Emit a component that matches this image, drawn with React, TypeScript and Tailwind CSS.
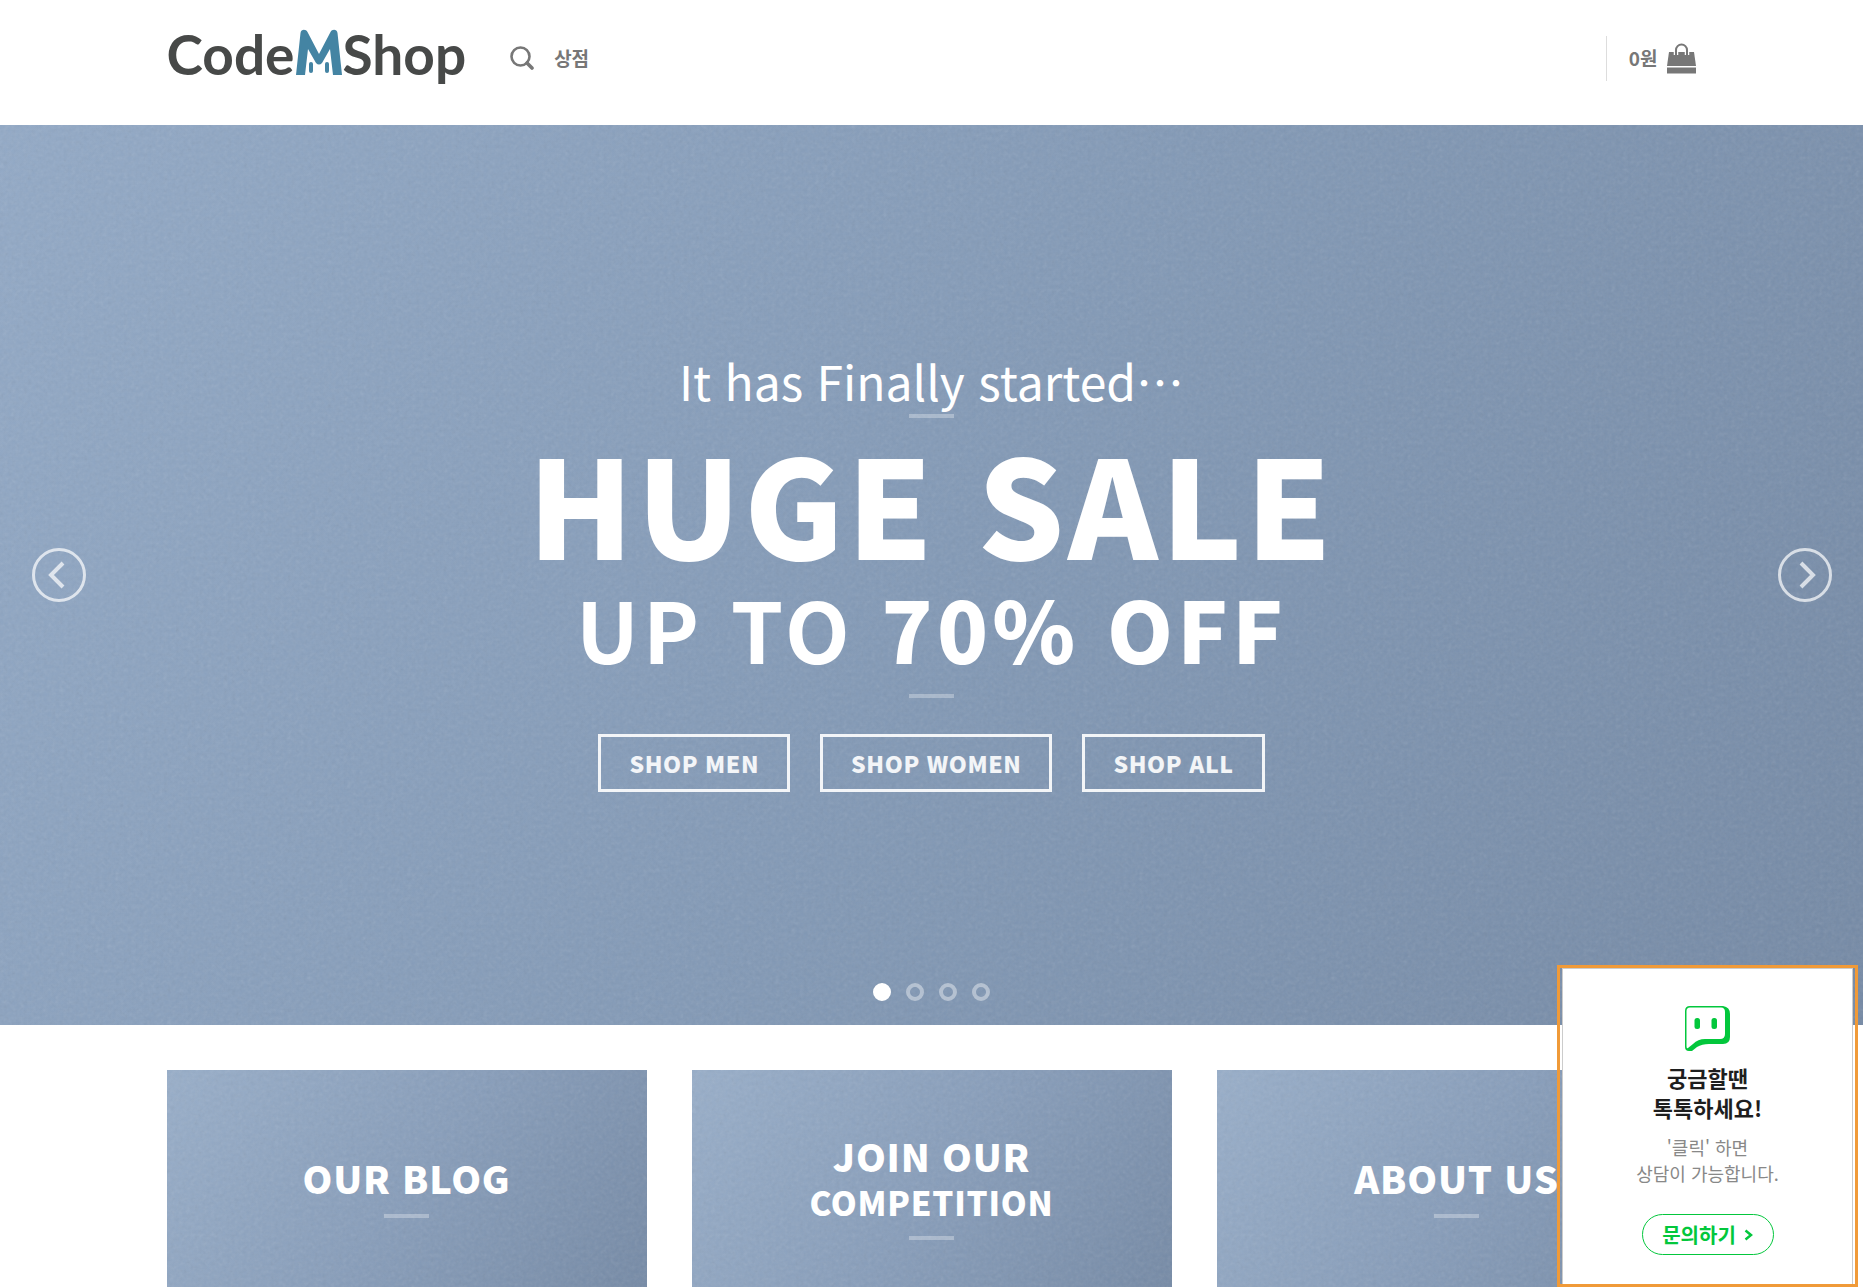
import React, { useState } from "react";

const shopLinks = ["SHOP MEN", "SHOP WOMEN", "SHOP ALL"];

const Divider = () => <div className="h-1 w-[45px] bg-white/30" />;

const Texture = () => (
  <svg aria-hidden="true" className="pointer-events-none absolute inset-0 h-full w-full opacity-15">
    <filter id="grain">
      <feTurbulence type="fractalNoise" baseFrequency="0.25" numOctaves="3" />
      <feColorMatrix type="saturate" values="0" />
    </filter>
    <rect width="100%" height="100%" filter="url(#grain)" />
  </svg>
);

const Logo = () => (
  <a href="#" aria-label="CodeMShop" className="mb-2 flex items-center font-[Lato,sans-serif] text-[55px] leading-[68px] font-bold text-[#474948]">
    <span>Code</span>
    <svg width="48" height="46" viewBox="0 0 48 46" className="mb-1">
      <path
        d="M1 46 5.5 4C6 0 11 0 12.5 3L24 25 35.500 3C37 0 42 0 42.500 4L47 46H38L35 20 27 34Q24 37 21 34L13 20 10 46Z"
        fill="#4484a3"
      />
      <rect x="14" y="33" width="4" height="11" rx="2" fill="#4484a3" />
      <rect x="30" y="33" width="4" height="11" rx="2" fill="#4484a3" />
    </svg>
    <span>Shop</span>
  </a>
);

const Header = () => (
  <header className="h-[125px] bg-white">
    <div className="mx-auto flex h-[116px] max-w-[1530px] items-center text-[#777]">
      <Logo />
      <button aria-label="검색" className="ml-11">
        <svg width="24" height="24" viewBox="0 0 24 24" fill="none" stroke="currentColor">
          <circle cx="10.500" cy="10.500" r="9" strokeWidth="2.600" />
          <path d="M17 17l5 5" strokeWidth="3.600" strokeLinecap="round" />
        </svg>
      </button>
      <a href="#" className="ml-5 text-[19px] font-bold">상점</a>
      <a href="#" className="ml-auto flex h-[45px] items-center gap-2 border-l border-[#ddd] pl-[22px] text-[19px] font-bold">
        0원
        <svg width="31" height="31" viewBox="0 0 31 31">
          <path d="M3 9H28L30 23H1Z" fill="currentColor" />
          <path d="M1 24.500H30V30.500H1Z" fill="currentColor" />
          <path d="M10 12V7.500a5.500 5.500 0 0 1 11 0V12" fill="none" stroke="#fff" strokeWidth="4.500" />
          <path d="M10 12V7a5.500 5.500 0 0 1 11 0V12" fill="none" stroke="currentColor" strokeWidth="2" />
        </svg>
      </a>
    </div>
  </header>
);

const Arrow = ({ side, onClick }: { side: "left" | "right"; onClick: () => void }) => (
  <button
    aria-label={side}
    onClick={onClick}
    className={`absolute top-[423px] h-[54px] w-[54px] text-white/70 ${side === "left" ? "left-8" : "right-[31px]"}`}
  >
    <svg width="54" height="54" viewBox="0 0 54 54" fill="none" stroke="currentColor">
      <circle cx="27" cy="27" r="25.500" strokeWidth="3" />
      <path d={side === "left" ? "M31 15 19 27 31 39" : "M23 15 35 27 23 39"} strokeWidth="4" />
    </svg>
  </button>
);

const Hero = () => {
  const [slide, setSlide] = useState<number>(0);

  return (
    <section className="relative h-[900px] bg-linear-[120deg,#92a9c6_0%,#8299b6_50%,#7489a5_100%] text-white">
      <Texture />
      <div className="relative flex flex-col items-center pt-[223px]">
        <p className="text-[48px] leading-[64px]">It has Finally started…</p>
        <div className="mt-0.5 mb-3.5">
          <Divider />
        </div>
        <h1 className="text-[136px] leading-[137px] font-black tracking-wide">HUGE SALE</h1>
        <h2 className="mt-4 mb-6 text-[84px] leading-[85px] font-bold tracking-wider">
          UP TO <b className="font-black">70% OFF</b>
        </h2>
        <Divider />
        <div className="mt-9 flex gap-[30px]">
          {shopLinks.map((label) => (
            <a key={label} href="#" className="flex h-[58px] items-center border-3 border-white/90 px-7 text-[23px] font-black tracking-wide text-white/90">
              {label}
            </a>
          ))}
        </div>
      </div>
      <Arrow side="left" onClick={() => setSlide((slide + 3) % 4)} />
      <Arrow side="right" onClick={() => setSlide((slide + 1) % 4)} />
      <div className="absolute inset-x-0 bottom-6 flex justify-center gap-[15px]">
        {[0, 1, 2, 3].map((i) => (
          <button
            key={i}
            aria-label={`slide ${i + 1}`}
            onClick={() => setSlide(i)}
            className={`h-[18px] w-[18px] rounded-full border-4 ${i === slide ? "border-white bg-white" : "border-white/40"}`}
          />
        ))}
      </div>
    </section>
  );
};

const Card = ({ title, subtitle }: { title: string; subtitle?: string }) => (
  <a href="#" className="relative h-[232px] bg-linear-[125deg,#98aec9_0%,#879dba_50%,#7489a5_100%] font-black tracking-wider text-white">
    <Texture />
    <div className="relative flex h-full flex-col items-center justify-center">
      <h3 className="text-[38px] leading-[48px]">{title}</h3>
      {subtitle && <h3 className="text-[33px] leading-[44px]">{subtitle}</h3>}
      <div className="mt-3">
        <Divider />
      </div>
    </div>
  </a>
);

const TalkWidget = () => (
  <aside className="fixed right-[5px] bottom-0 w-[301px] border-3 border-[#f09a38] px-0.5">
    <div className="flex h-[316px] flex-col items-center border-x border-t border-[#ccc] bg-white pt-[37px] text-center">
      <svg width="46" height="46" viewBox="0 0 46 46">
        <path d="M5 0H38Q45 1 45 8V31Q45 38 38 38H24Q17 38 12 41L7 45H4Q0 45 0 41V5Q0 0 5 0Z" fill="#03c73c" />
        <path d="M5 1.500H36Q40 1.500 40 6V28Q40 33 35 33H20Q13 33 8 38L3 42Q1.500 43 1.500 40V5Q1.500 1.500 5 1.500Z" fill="#fff" />
        <rect x="9.500" y="12" width="5.500" height="11" rx="2.500" fill="#03c73c" />
        <rect x="26.500" y="12" width="5.500" height="11" rx="2.500" fill="#03c73c" />
      </svg>
      <strong className="mt-2.5 text-[22px] leading-[30px] font-bold text-[#1e1e1e]">
        궁금할땐
        <br />
        톡톡하세요!
      </strong>
      <p className="mt-3 text-lg leading-[26px] text-[#888]">
        '클릭' 하면
        <br />
        상담이 가능합니다.
      </p>
      <button className="mt-7 flex h-[41px] w-[132px] items-center justify-center gap-2 rounded-full border border-[#03c73c] text-[20px] font-bold text-[#03c73c]">
        문의하기
        <svg width="9" height="12" viewBox="0 0 9 12" fill="none" stroke="currentColor" strokeWidth="2.500">
          <path d="M1.500 1.500 7 6 1.500 10.500" />
        </svg>
      </button>
    </div>
  </aside>
);

const App = () => {
  return (
    <div lang="ko" className="bg-white font-['Noto_Sans_CJK_KR',sans-serif]">
      <Header />
      <Hero />
      <main className="mx-auto mt-[45px] grid max-w-[1530px] grid-cols-3 gap-[45px]">
        <Card title="OUR BLOG" />
        <Card title="JOIN OUR" subtitle="COMPETITION" />
        <Card title="ABOUT US" />
      </main>
      <TalkWidget />
    </div>
  );
};

export default App;
